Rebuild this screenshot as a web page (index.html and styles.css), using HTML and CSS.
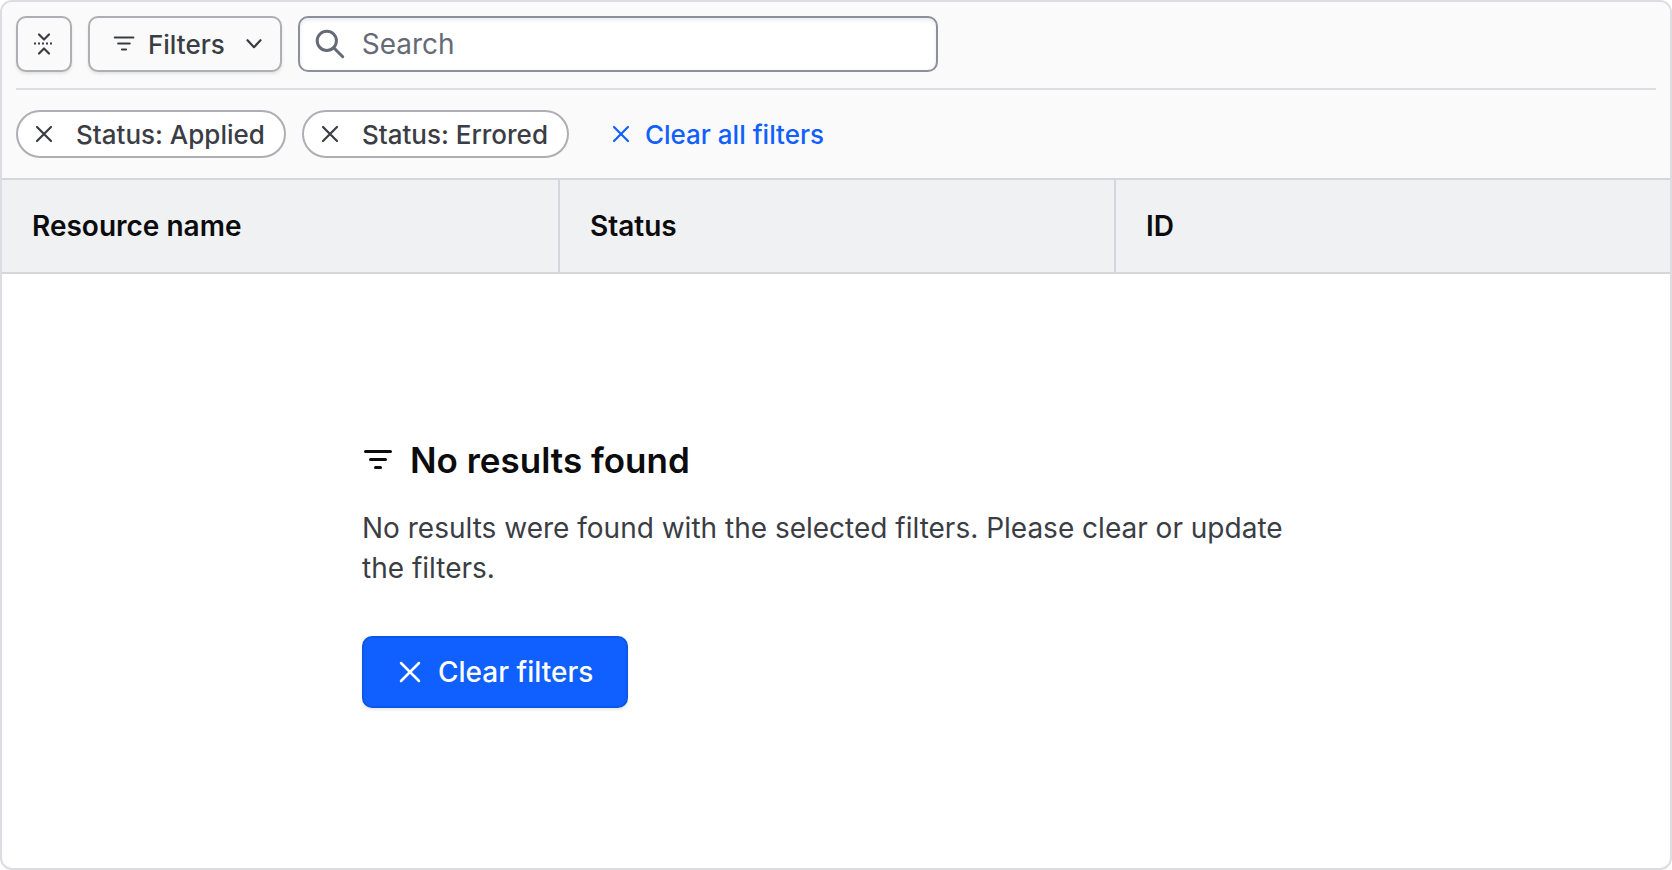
FILE: index.html
```html
<!DOCTYPE html>
<html lang="en">
<head>
<meta charset="utf-8">
<meta name="viewport" content="width=device-width, initial-scale=1">
<title>Resources</title>
<link rel="stylesheet" href="styles.css">
</head>
<body>
<main class="panel">
  <div class="filter-bar">
    <div class="toolbar">
      <button class="button button-square" type="button" aria-label="Collapse filters">
        <svg class="icon-md" viewBox="0 0 24 24" aria-hidden="true">
          <path class="stroke" d="M7 2.500l5 5 5-5M7 21.500l5-5 5 5"/>
          <path class="dots" d="M2 11.500h20"/>
        </svg>
      </button>
      <button class="button button-filters" type="button">
        <svg class="icon-md" viewBox="0 0 24 24" aria-hidden="true"><path class="stroke" d="M2.800 5.500h18.500M6.200 11.500h11.500M10 17.500h4"/></svg>
        <span class="filters-label">Filters</span>
        <svg class="icon-md" viewBox="0 0 24 24" aria-hidden="true"><path class="stroke" d="M5.500 8.200l6.500 7 6.500-7"/></svg>
      </button>
      <label class="search">
        <svg class="icon-lg search-icon" viewBox="0 0 32 32" aria-hidden="true"><circle cx="12.800" cy="12.800" r="9.600"/><path d="M19.700 19.700l9 9"/></svg>
        <input class="search-input" type="text" placeholder="Search" aria-label="Search">
      </label>
    </div>
    <div class="applied">
      <span class="chip">
        <button class="chip-dismiss" type="button" aria-label="Dismiss Status: Applied">
          <svg class="icon-sm" viewBox="0 0 20 20" aria-hidden="true"><path class="stroke" d="M3 3l14 14M17 3L3 17"/></svg>
        </button>
        <span>Status: Applied</span>
      </span>
      <span class="chip">
        <button class="chip-dismiss" type="button" aria-label="Dismiss Status: Errored">
          <svg class="icon-sm" viewBox="0 0 20 20" aria-hidden="true"><path class="stroke" d="M3 3l14 14M17 3L3 17"/></svg>
        </button>
        <span>Status: Errored</span>
      </span>
      <button class="clear-all" type="button">
        <svg class="icon-sm" viewBox="0 0 20 20" aria-hidden="true"><path class="stroke" d="M3 3l14 14M17 3L3 17"/></svg>
        <span>Clear all filters</span>
      </button>
    </div>
  </div>
  <table class="table">
    <thead>
      <tr><th scope="col">Resource name</th><th scope="col">Status</th><th scope="col">ID</th></tr>
    </thead>
  </table>
  <div class="empty">
    <section class="empty-content">
      <h1 class="empty-title">
        <svg class="icon-lg" viewBox="0 0 32 32" aria-hidden="true"><path class="stroke stroke-bold" d="M3.500 7.500h25M8.500 15.500h15M13.500 23.500h5"/></svg>
        <span>No results found</span>
      </h1>
      <p class="empty-text">No results were found with the selected filters. Please clear or update the filters.</p>
      <button class="clear-button" type="button">
        <svg class="icon-md" viewBox="0 0 24 24" aria-hidden="true"><path class="stroke stroke-medium" d="M3 3l18 18M21 3L3 21"/></svg>
        <span>Clear filters</span>
      </button>
    </section>
  </div>
</main>
</body>
</html>
```
FILE: styles.css
```css
* { box-sizing: border-box; }

body {
  margin: 0;
  background: #fff;
  color: #3b3d45;
  font-family: Inter, "Liberation Sans", sans-serif;
}

button, input { font: inherit; color: inherit; }
button { cursor: pointer; }
svg { display: block; flex: none; fill: none; stroke: currentColor; }

.stroke { stroke-width: 2.2; stroke-linecap: round; stroke-linejoin: round; }
.stroke-medium { stroke-width: 2.5; }
.stroke-bold { stroke-width: 3; }
.dots { stroke-width: 2; stroke-dasharray: 2 2; }
.icon-sm { width: 20px; height: 20px; }
.icon-md { width: 24px; height: 24px; }
.icon-lg { width: 32px; height: 32px; }

.panel {
  display: flex;
  flex-direction: column;
  min-height: 100vh;
  overflow: hidden;
  border: 2px solid #dcdce1;
  border-radius: 12px;
}

.filter-bar { padding: 0 14px; background: #fafafa; }

.toolbar {
  display: flex;
  gap: 16px;
  padding: 14px 0 16px;
  border-bottom: 2px solid #dcdce1;
}

.button {
  display: flex;
  align-items: center;
  height: 56px;
  border: 2px solid #aeaeb4;
  border-radius: 10px;
  background: #fafafa;
  box-shadow: 0 2px 3px rgba(101, 106, 118, 0.16);
  font-size: 26px;
  font-weight: 500;
}
.button-square { justify-content: center; width: 56px; padding: 0; }
.button-filters { padding: 0 14px 0 22px; }
.filters-label { margin: 0 17px 0 12px; }

.search {
  display: flex;
  align-items: center;
  gap: 16px;
  width: 640px;
  height: 56px;
  padding: 0 14px;
  border: 2px solid #8c909c;
  border-radius: 10px;
  background: #fff;
  box-shadow: inset 0 2px 4px rgba(101, 106, 118, 0.14);
  font-size: 28px;
}
.search-icon { color: #656a76; stroke-width: 3; stroke-linecap: round; }
.search-input {
  flex: 1;
  min-width: 0;
  padding: 0;
  border: 0;
  outline: 0;
  background: transparent;
}
.search-input::placeholder { color: #656a76; opacity: 1; }

.applied {
  display: flex;
  align-items: center;
  gap: 16px;
  padding: 20px 0;
  font-size: 26px;
  font-weight: 500;
}
.chip {
  display: flex;
  align-items: center;
  height: 48px;
  padding-right: 19px;
  border: 2px solid #aeaeb4;
  border-radius: 24px;
  background: #fff;
}
.chip-dismiss {
  display: flex;
  padding: 12px 22px 12px 16px;
  border: 0;
  background: none;
}
.clear-all {
  display: flex;
  align-items: center;
  gap: 14px;
  padding: 0 26px;
  border: 0;
  background: none;
  color: #1060ff;
}

.table {
  width: 100%;
  table-layout: fixed;
  border-spacing: 0;
  color: #0c0c0e;
  font-size: 28px;
  line-height: 36px;
}
.table th {
  padding: 28px 30px;
  border: 0 solid #d5d5da;
  border-width: 2px 0;
  background: #f0f1f3;
  text-align: left;
  font-weight: 600;
}
.table th + th { border-left-width: 2px; }

.empty {
  display: flex;
  flex: 1;
  align-items: center;
  justify-content: center;
  padding: 42px 40px 40px;
}
.empty-content { width: 100%; max-width: 948px; }
.empty-title {
  display: flex;
  align-items: center;
  gap: 16px;
  margin: 0;
  color: #0c0c0e;
  font-size: 35px;
  font-weight: 600;
  line-height: 48px;
}
.empty-text { margin: 24px 0 48px; font-size: 28px; line-height: 40px; }
.clear-button {
  display: flex;
  align-items: center;
  gap: 16px;
  height: 72px;
  padding: 0 33px 0 34px;
  border: 2px solid #0c56e9;
  border-radius: 10px;
  background: #1060ff;
  box-shadow: 0 2px 3px rgba(101, 106, 118, 0.16);
  color: #fff;
  font-size: 28px;
  font-weight: 500;
}
```
